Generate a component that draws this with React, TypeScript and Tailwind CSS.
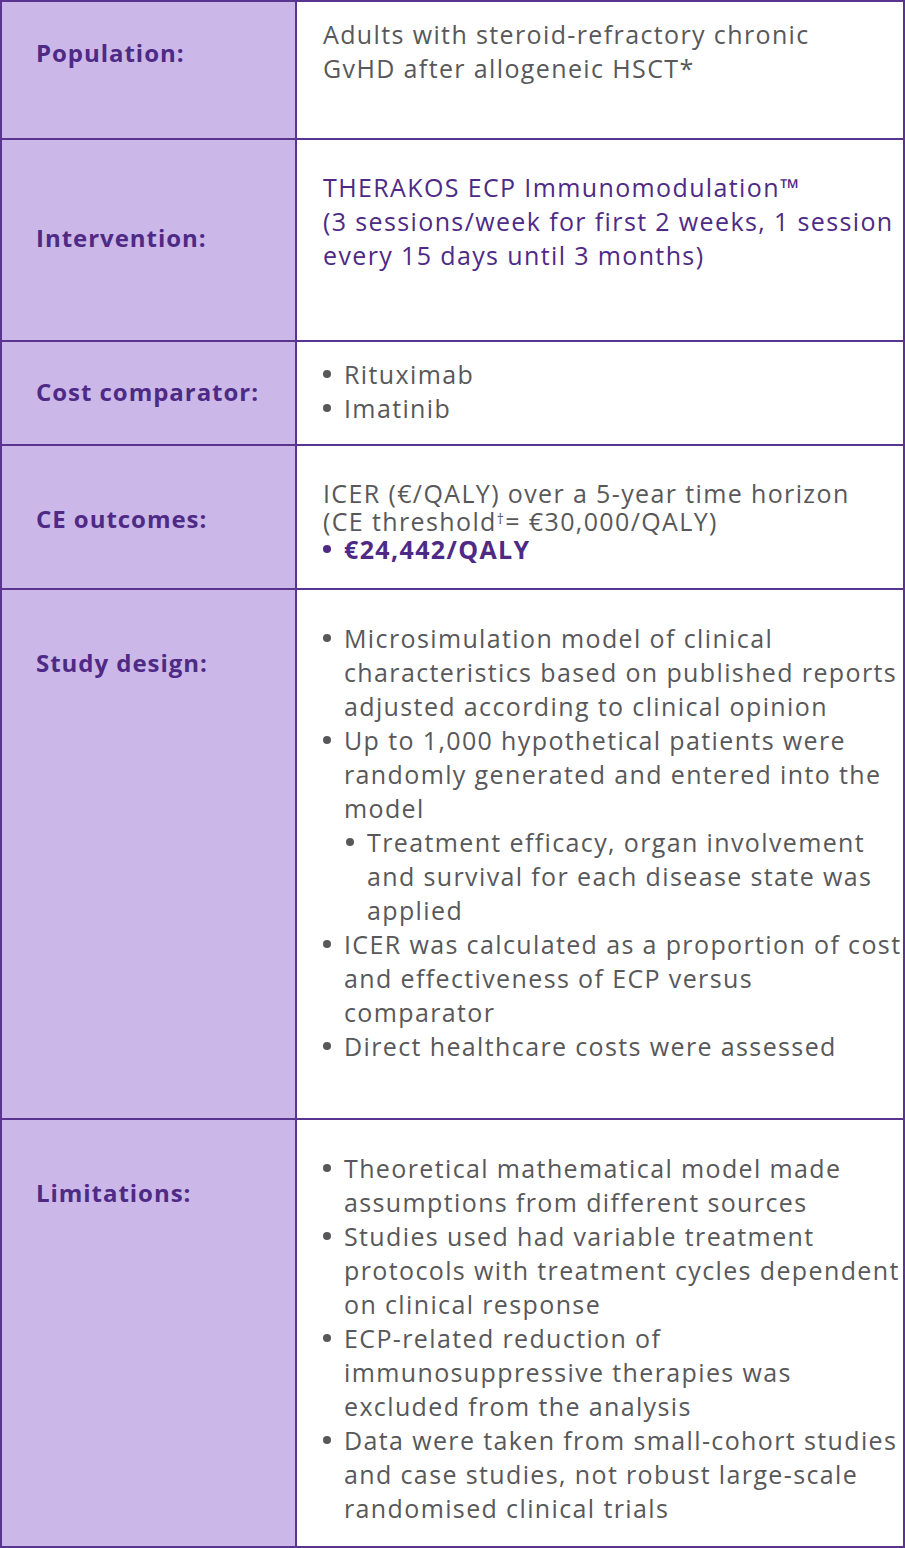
import React from "react";

type Item = { lines: string[]; sub?: boolean };

const Dot = ({ h = "h-[34px]" }: { h?: string }) => (
  <span className={`w-[20px] shrink-0 flex items-center ${h}`}>
    <span className="w-[8px] h-[8px] rounded-full bg-current" />
  </span>
);

const Bullets = ({ items }: { items: Item[] }) => (
  <ul>
    {items.map((it, i) => (
      <li key={i} className={`flex ${it.sub ? "pl-[23px]" : ""}`}>
        <Dot />
        <span className="pl-[1px]">
          {it.lines.map((l, j) => (
            <span key={j} className="block whitespace-nowrap">
              {l}
            </span>
          ))}
        </span>
      </li>
    ))}
  </ul>
);

const Row = ({
  label,
  labelPt,
  bodyPt,
  height,
  children,
  last,
}: {
  label: string;
  labelPt: string;
  bodyPt: string;
  height: string;
  children: React.ReactNode;
  last?: boolean;
}) => (
  <div className={`flex ${height} ${last ? "" : "border-b-2 border-[#5a3590]"}`}>
    <div className={`w-[295px] shrink-0 bg-[#cbb8e8] border-r-2 border-[#5a3590] pl-[34px] text-[24px] tracking-[0.04em] ${labelPt}`}>
      <span className="font-bold text-[#4e2a86]">{label}</span>
    </div>
    <div className={`flex-1 pl-[26px] text-[#58585a] whitespace-nowrap ${bodyPt}`}>{children}</div>
  </div>
);

export default function App() {
  return (
    <div className="w-[905px] bg-white">
      <div
        className="border-2 border-[#5a3590] text-[25px] leading-[34px] tracking-[0.055em]"
        style={{ fontFamily: "'Open Sans', 'Liberation Sans', sans-serif" }}
      >
        <Row label="Population:" labelPt="pt-[34px]" bodyPt="pt-[15px]" height="h-[138px]">
          <p>
            Adults with steroid-refractory chronic
            <br />
            GvHD after allogeneic HSCT*
          </p>
        </Row>

        <Row label="Intervention:" labelPt="pt-[81px]" bodyPt="pt-[30px]" height="h-[202px]">
          <p className="text-[#4e2a86]">
            THERAKOS ECP Immunomodulation™
            <br />
            (3 sessions/week for first 2 weeks, 1 session
            <br />
            every 15 days until 3 months)
          </p>
        </Row>

        <Row label="Cost comparator:" labelPt="pt-[33px]" bodyPt="pt-[15px]" height="h-[104px]">
          <Bullets items={[{ lines: ["Rituximab"] }, { lines: ["Imatinib"] }]} />
        </Row>

        <Row label="CE outcomes:" labelPt="pt-[56px]" bodyPt="pt-[33px]" height="h-[144px]">
          <div className="leading-[28px]">
            <p>ICER (€/QALY) over a 5-year time horizon</p>
            <p>
              (CE threshold<sup className="text-[14px]">†</sup>= €30,000/QALY)
            </p>
            <p className="flex font-bold text-[#4e2a86]">
              <Dot h="h-[28px]" />
              <span className="pl-[1px]">€24,442/QALY</span>
            </p>
          </div>
        </Row>

        <Row label="Study design:" labelPt="pt-[56px]" bodyPt="pt-[31px]" height="h-[530px]">
          <Bullets
            items={[
              { lines: ["Microsimulation model of clinical", "characteristics based on published reports", "adjusted according to clinical opinion"] },
              { lines: ["Up to 1,000 hypothetical patients were", "randomly generated and entered into the", "model"] },
              { lines: ["Treatment efficacy, organ involvement", "and survival for each disease state was", "applied"], sub: true },
              { lines: ["ICER was calculated as a proportion of cost", "and effectiveness of ECP versus", "comparator"] },
              { lines: ["Direct healthcare costs were assessed"] },
            ]}
          />
        </Row>

        <Row label="Limitations:" labelPt="pt-[56px]" bodyPt="pt-[31px]" height="h-[426px]" last>
          <Bullets
            items={[
              { lines: ["Theoretical mathematical model made", "assumptions from different sources"] },
              { lines: ["Studies used had variable treatment", "protocols with treatment cycles dependent", "on clinical response"] },
              { lines: ["ECP-related reduction of", "immunosuppressive therapies was", "excluded from the analysis"] },
              { lines: ["Data were taken from small-cohort studies", "and case studies, not robust large-scale", "randomised clinical trials"] },
            ]}
          />
        </Row>
      </div>
    </div>
  );
}
